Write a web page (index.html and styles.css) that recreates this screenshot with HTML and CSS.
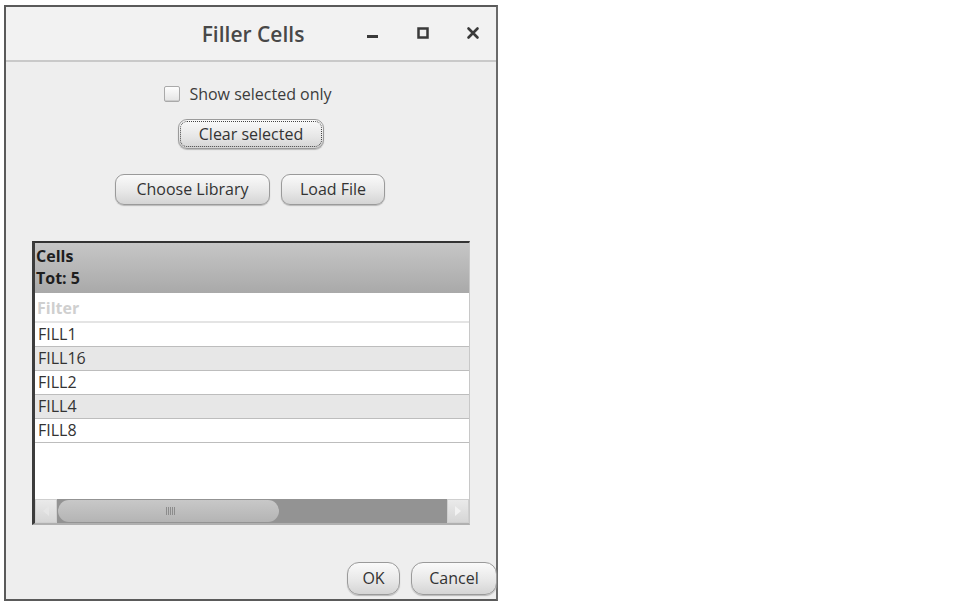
FILE: index.html
```html
<!DOCTYPE html>
<html>
<head>
<meta charset="utf-8">
<link rel="stylesheet" href="styles.css">
</head>
<body>
<div class="window">
  <div class="titlebar">
    <div class="title">Filler Cells</div>
    <div class="controls">
      <span class="ctl min"><svg width="14" height="14" viewBox="0 0 14 14"><rect x="1" y="9" width="11" height="3" fill="#3a3a3a"/></svg></span>
      <span class="ctl max"><svg width="14" height="14" viewBox="0 0 14 14"><rect x="2.5" y="2.5" width="9" height="9" fill="none" stroke="#3a3a3a" stroke-width="2.5"/></svg></span>
      <span class="ctl close"><svg width="14" height="14" viewBox="0 0 14 14"><path d="M2.5 2.5 L11.5 11.5 M11.5 2.5 L2.5 11.5" stroke="#3a3a3a" stroke-width="2.6" stroke-linecap="round"/></svg></span>
    </div>
  </div>
  <div class="content">
    <label class="check"><span class="box"></span><span>Show selected only</span></label>
    <div class="row-center"><button class="btn focus">Clear selected</button></div>
    <div class="row-center two"><button class="btn wide">Choose Library</button><button class="btn">Load File</button></div>
    <div class="table">
      <div class="thead"><div>Cells</div><div>Tot: 5</div></div>
      <div class="filter">Filter</div>
      <div class="tr">FILL1</div>
      <div class="tr alt">FILL16</div>
      <div class="tr">FILL2</div>
      <div class="tr alt">FILL4</div>
      <div class="tr">FILL8</div>
      <div class="empty"></div>
      <div class="hscroll">
        <div class="arrow left"><svg width="12" height="14" viewBox="0 0 12 14"><path d="M9 2 L3 7 L9 12 Z" fill="#e6e6e6"/></svg></div>
        <div class="track"><div class="thumb"><span class="grip"></span></div></div>
        <div class="arrow right"><svg width="12" height="14" viewBox="0 0 12 14"><path d="M3 2 L9 7 L3 12 Z" fill="#f2f2f2"/></svg></div>
      </div>
    </div>
    <div class="footer"><button class="btn ok">OK</button><button class="btn cancel">Cancel</button></div>
  </div>
</div>
</body>
</html>
```
FILE: styles.css
```css
html, body { margin: 0; padding: 0; background: #ffffff; }
body { font-family: "Open Sans", "Noto Sans", sans-serif; color: #333; }
.window {
  margin: 5px 0 0 4px;
  width: 494px;
  height: 596px;
  border: 2px solid #5a5a5a;
  border-right-color: #6a6a6a;
  background: #eeeeee;
  display: flex;
  flex-direction: column;
  box-sizing: border-box;
}
.titlebar {
  height: 53px;
  flex: none;
  background: #f2f2f2;
  border-bottom: 2px solid #c9c9c9;
  position: relative;
  display: flex;
  align-items: center;
  justify-content: center;
}
.title { font-size: 21px; font-weight: 600; color: #484848; margin-left: 4px; }
.controls { position: absolute; right: 16px; top: 19px; display: flex; gap: 36px; }
.ctl { width: 14px; height: 14px; display: block; }
.ctl svg { display: block; }
.content { flex: 1; display: flex; flex-direction: column; padding: 0; }
.check { display: flex; align-items: center; justify-content: center; gap: 9px; margin-top: 21px; font-size: 16px; color: #3c3c3c; margin-right: 6px; }
.box { width: 14px; height: 14px; border: 1px solid #a9a9a9; border-radius: 2px; background: linear-gradient(#fdfdfd, #e4e4e4); box-shadow: inset 0 -1px 0 #ccc; }
.row-center { display: flex; justify-content: center; gap: 11px; }
.btn {
  font-family: inherit;
  font-size: 16px;
  color: #333;
  border: 1px solid #9a9a9a;
  border-radius: 9px;
  background: linear-gradient(#fafafa, #e6e6e6 60%, #d4d4d4);
  box-shadow: 0 1px 1px #b8b8b8;
  height: 31px;
  padding: 0 19px;
  line-height: 29px;
}
.focus { margin-top: 14px; width: 146px; padding: 0; outline: 1px dotted #444; outline-offset: -3px; height: 30px; margin-left: 0; }
.two { margin-top: 25px; margin-right: 2px; }
.wide { width: 155px; padding: 0; }
.two .btn:last-child { width: 104px; padding: 0; }
.table {
  margin: 36px 0 0 26px;
  width: 438px;
  height: 284px;
  background: #fff;
  border-top: 2px solid #333;
  border-left: 3px solid #3c3c3c;
  border-right: 1px solid #c8c8c8;
  border-bottom: 2px solid #b0b0b0;
  box-sizing: border-box;
  display: flex;
  flex-direction: column;
  font-size: 15px;
}
.thead {
  height: 50px;
  flex: none;
  background: linear-gradient(#c6c6c6, #a9a9a9);
  font-weight: 700;
  color: #1e1e1e;
  padding: 2px 0 0 1px;
  box-sizing: border-box;
  line-height: 22px;
  font-size: 16px;
}
.filter { height: 30px; flex: none; border-bottom: 2px solid #e4e4e4; color: #cfcfcf; font-weight: 700; padding-left: 2px; line-height: 30px; box-sizing: border-box; font-size: 16px; }
.tr { height: 24px; flex: none; line-height: 23px; padding-left: 3px; border-bottom: 1px solid #bdbdbd; box-sizing: border-box; color: #333; font-size: 16px; }
.alt { background: #e7e7e7; }
.tr:last-of-type { border-bottom: 3px solid #dcdcdc; }
.empty { flex: 1; }
.hscroll { height: 24px; flex: none; display: flex; background: #e4e4e4; }
.arrow { width: 22px; display: flex; align-items: center; justify-content: center; background: linear-gradient(#eaeaea, #d6d6d6); border: 1px solid #cfcfcf; box-sizing: border-box; }
.track { flex: 1; background: #939393; display: flex; align-items: center; padding-left: 1px; }
.thumb { width: 221px; height: 22px; border-radius: 11px; background: linear-gradient(#c8c8c8, #b4b4b4); display: flex; align-items: center; justify-content: center; }
.grip { width: 10px; height: 8px; background: repeating-linear-gradient(90deg, #8c8c8c 0 1px, transparent 1px 2px); margin-left: 4px; }
.footer { margin-top: auto; display: flex; justify-content: flex-end; gap: 11px; padding: 0 0 4px 0; margin-right: -1px; }
.ok { width: 53px; height: 33px; padding: 0; border-radius: 12px; }
.cancel { width: 86px; height: 33px; padding: 0; border-radius: 12px; }
```
